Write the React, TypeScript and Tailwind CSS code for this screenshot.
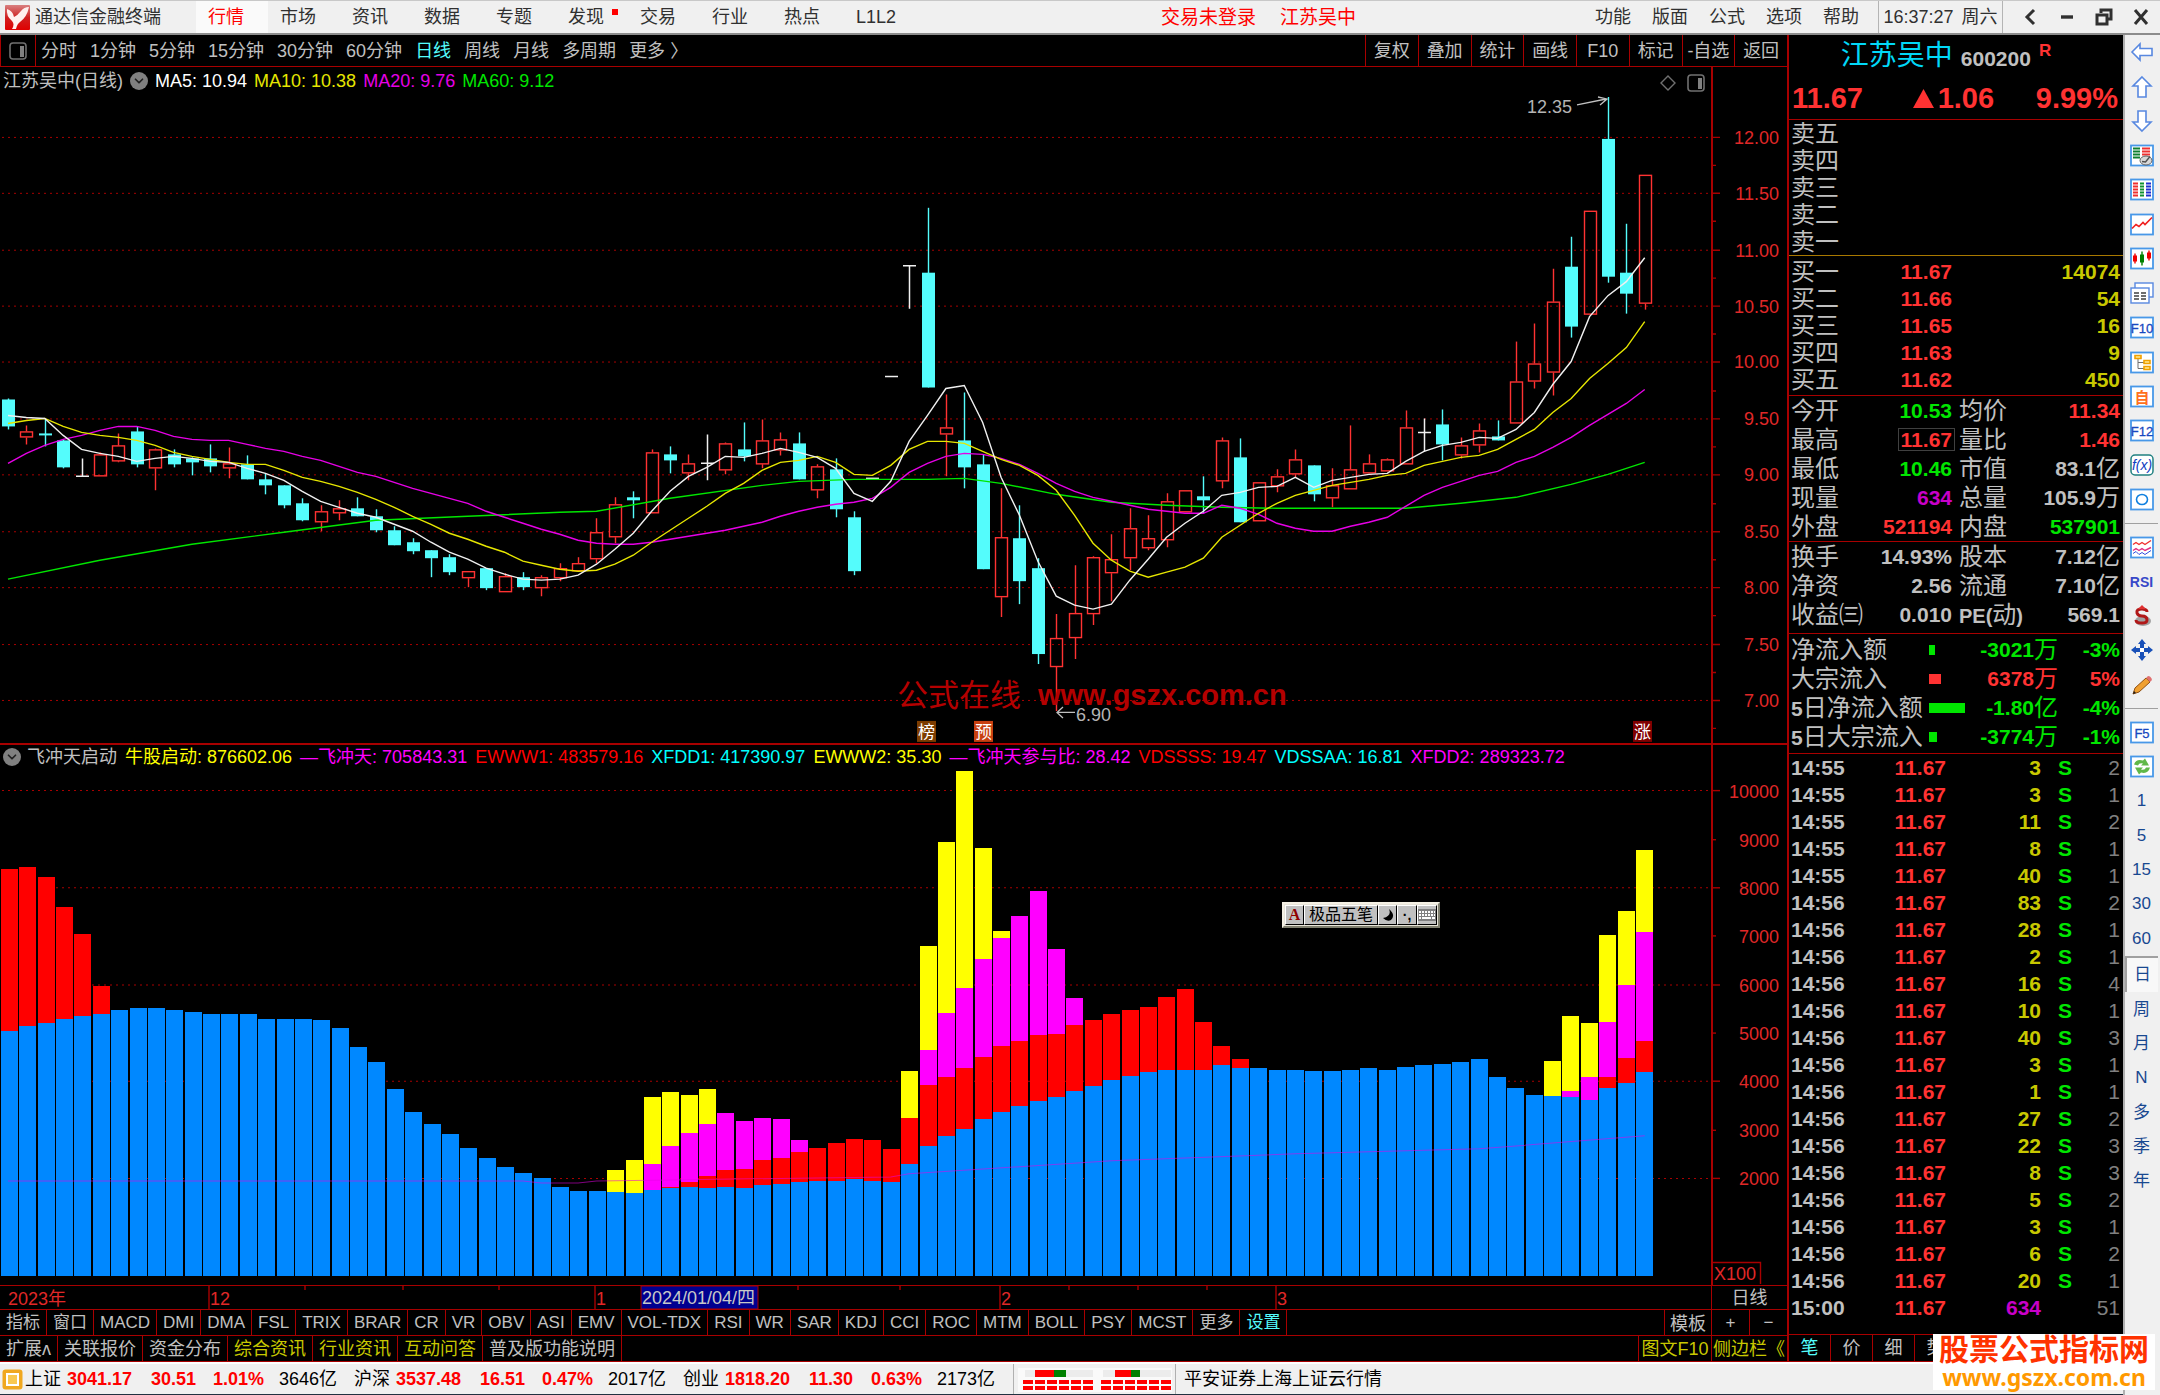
import type { ReactNode } from 'react';
import { ChevronDown } from 'lucide-react';

type Candle = ['u' | 'd' | 'w', number, number, number, number];
type Tick = [string, string, number, string, number];

const LINE = '#a80000';
const STEP = 18.39;

// kind, high, body top, body bottom, low
const candles: Candle[] = [
  ['d', 399, 400, 427, 430], ['u', 426, 432, 438, 445], ['d', 420, 434, 436, 447], ['d', 440, 441, 468, 469],
  ['w', 459, 477, 477, 477], ['u', 453, 455, 477, 477], ['u', 434, 446, 462, 463], ['d', 427, 432, 465, 468],
  ['u', 449, 450, 469, 491], ['d', 450, 455, 465, 468], ['d', 458, 459, 463, 476], ['d', 445, 459, 467, 473],
  ['u', 448, 464, 469, 479], ['d', 456, 465, 480, 480], ['d', 474, 480, 486, 495], ['d', 486, 486, 506, 509],
  ['d', 499, 504, 521, 522], ['u', 506, 512, 523, 532], ['u', 501, 509, 514, 521], ['d', 498, 509, 517, 517],
  ['d', 510, 517, 531, 533], ['d', 527, 531, 546, 546], ['d', 539, 543, 552, 555], ['d', 551, 551, 559, 578],
  ['d', 555, 558, 573, 576], ['u', 572, 572, 579, 588], ['d', 569, 569, 589, 591], ['u', 574, 577, 593, 593],
  ['d', 573, 578, 588, 591], ['u', 576, 578, 589, 597], ['u', 564, 569, 579, 582], ['u', 558, 564, 572, 572],
  ['u', 519, 533, 560, 564], ['u', 498, 505, 538, 544], ['d', 492, 498, 501, 519], ['u', 450, 453, 514, 514],
  ['d', 447, 455, 461, 474], ['u', 455, 464, 474, 481], ['w', 435, 464, 464, 481], ['u', 443, 444, 471, 475],
  ['d', 423, 450, 457, 462], ['u', 420, 441, 465, 469], ['u', 433, 440, 451, 456], ['d', 433, 444, 480, 480],
  ['u', 465, 467, 491, 499], ['d', 459, 470, 510, 518], ['d', 512, 518, 572, 576], ['w', 479, 479, 479, 479],
  ['w', 377, 377, 377, 377], ['w', 266, 266, 266, 309], ['d', 208, 273, 388, 388], ['u', 395, 428, 435, 477],
  ['d', 393, 441, 468, 489], ['d', 455, 465, 570, 570], ['u', 489, 538, 598, 618], ['d', 506, 539, 582, 605],
  ['d', 559, 569, 655, 665], ['u', 615, 639, 668, 712], ['u', 566, 614, 639, 660], ['u', 557, 558, 615, 626],
  ['u', 535, 560, 574, 602], ['u', 509, 529, 559, 571], ['u', 516, 539, 549, 551], ['u', 494, 502, 541, 548],
  ['u', 491, 491, 513, 513], ['d', 477, 497, 501, 514], ['u', 438, 441, 482, 489], ['d', 439, 458, 523, 523],
  ['u', 483, 483, 522, 522], ['u', 470, 477, 487, 493], ['u', 450, 460, 475, 478], ['d', 466, 466, 495, 502],
  ['u', 469, 486, 499, 508], ['u', 426, 470, 490, 490], ['u', 455, 464, 474, 474], ['u', 459, 460, 472, 472],
  ['u', 411, 428, 465, 465], ['w', 419, 433, 433, 452], ['d', 410, 425, 445, 461], ['u', 438, 446, 456, 459],
  ['u', 424, 431, 446, 453], ['d', 421, 437, 441, 441], ['u', 342, 382, 424, 424], ['u', 324, 364, 382, 389],
  ['u', 269, 302, 373, 396], ['d', 237, 267, 327, 338], ['u', 211, 211, 315, 315], ['d', 97, 139, 277, 283],
  ['d', 224, 273, 294, 314], ['u', 175, 175, 304, 310],
];

const ma5 = [
  416, 418, 419, 436, 450, 454, 457, 462, 459, 457, 459, 462, 463, 469, 474, 481, 492, 502, 508, 514, 518, 525, 532, 543, 553,
  560, 569, 575, 580, 581, 580, 576, 565, 550, 534, 512, 492, 477, 468, 457, 458, 454, 449, 453, 458, 469, 494, 502, 482, 442,
  416, 389, 386, 423, 478, 516, 562, 597, 606, 610, 605, 581, 560, 538, 524, 512, 496, 493, 488, 487, 478, 488, 481, 478, 475,
  474, 462, 452, 446, 443, 438, 439, 430, 413, 385, 362, 317, 296, 282, 258,
];
const ma10 = [
  424, 421, 419, 427, 433, 436, 438, 441, 446, 453, 457, 460, 463, 465, 465, 471, 478, 482, 487, 493, 500, 508, 517, 525, 534,
  540, 547, 553, 562, 566, 570, 572, 571, 565, 556, 543, 531, 519, 507, 494, 484, 471, 463, 461, 457, 463, 475, 476, 466, 450,
  442, 442, 444, 452, 460, 466, 476, 491, 516, 544, 561, 572, 578, 573, 568, 559, 538, 526, 514, 504, 496, 491, 486, 483, 480,
  476, 474, 466, 462, 458, 456, 450, 440, 430, 413, 399, 379, 364, 348, 322,
];
const ma20 = [
  464, 454, 446, 440, 436, 431, 427, 427, 431, 437, 440, 441, 441, 445, 449, 452, 457, 461, 467, 473, 477, 483, 489, 494, 499,
  504, 512, 518, 524, 530, 535, 541, 544, 545, 545, 543, 540, 537, 534, 531, 527, 523, 517, 512, 508, 505, 503, 499, 488, 473,
  464, 457, 454, 455, 459, 465, 474, 484, 492, 498, 502, 506, 510, 512, 514, 514, 506, 509, 515, 524, 529, 532, 532, 527, 523,
  518, 507, 496, 488, 482, 476, 472, 463, 457, 448, 438, 426, 415, 404, 390,
];
// index, y
const ma60: [number, number][] = [
  [0, 580], [5, 561], [10, 545], [15, 533], [20, 521], [25, 517], [30, 513], [32, 512], [36, 499], [41, 486], [43, 482],
  [46, 480], [50, 480], [52, 479], [54, 484], [57, 495], [60, 503], [63, 506], [66, 508], [69, 509], [76, 509], [79, 504],
  [82, 498], [85, 485], [87, 475], [89, 463],
];

const blueTops = [
  1031, 1026, 1023, 1019, 1016, 1014, 1010, 1008, 1008, 1010, 1012, 1014, 1014, 1014, 1019, 1019, 1019, 1020, 1028, 1047,
  1062, 1089, 1112, 1124, 1134, 1148, 1158, 1167, 1173, 1178, 1187, 1191, 1191, 1192, 1193, 1190, 1188, 1187, 1188, 1187,
  1188, 1185, 1184, 1182, 1181, 1181, 1179, 1181, 1182, 1164, 1146, 1136, 1129, 1119, 1112, 1106, 1101, 1097, 1091, 1086,
  1080, 1076, 1072, 1070, 1070, 1070, 1065, 1068, 1068, 1070, 1070, 1071, 1071, 1070, 1068, 1070, 1067, 1065, 1064, 1062,
  1059, 1077, 1088, 1095, 1096, 1097, 1100, 1088, 1083, 1072,
];
const redTops: Record<number, number> = {
  0: 870, 1: 868, 2: 878, 3: 908, 4: 935, 5: 987, 36: 1187, 37: 1182, 38: 1176, 39: 1170, 40: 1169, 41: 1160, 42: 1158,
  43: 1152, 44: 1148, 45: 1143, 46: 1139, 47: 1140, 48: 1149, 49: 1118, 50: 1085, 51: 1077, 52: 1068, 53: 1057, 54: 1046,
  55: 1041, 56: 1035, 57: 1034, 58: 1025, 59: 1020, 60: 1014, 61: 1010, 62: 1007, 63: 998, 64: 990, 65: 1022, 66: 1046,
  67: 1059, 87: 1077, 88: 1058, 89: 1041,
};
const magentaTops: Record<number, number> = {
  35: 1164, 36: 1146, 37: 1133, 38: 1124, 39: 1113, 40: 1121, 41: 1118, 42: 1119, 43: 1140, 50: 1050, 51: 1013, 52: 989,
  53: 960, 54: 939, 55: 917, 56: 892, 57: 950, 58: 999, 85: 1091, 86: 1077, 87: 1022, 88: 986, 89: 933,
};
const yellowTops: Record<number, number> = {
  33: 1170, 34: 1160, 35: 1097, 36: 1092, 37: 1095, 38: 1089, 49: 1071, 50: 947, 51: 843, 52: 772, 53: 849, 54: 932,
  84: 1061, 85: 1016, 86: 1023, 87: 936, 88: 912, 89: 851,
};
const trend: [number, number][] = [
  [0, 1181], [28, 1181], [29, 1183], [31, 1183], [32, 1181], [36, 1180], [48, 1177], [49, 1174], [60, 1161], [70, 1154],
  [80, 1149], [89, 1136],
];

const buys: [string, string, string][] = [
  ['买一', '11.67', '14074'],
  ['买二', '11.66', '54'],
  ['买三', '11.65', '16'],
  ['买四', '11.63', '9'],
  ['买五', '11.62', '450'],
];

const R = 'text-[#ff3232]';
const G = 'text-[#00e600]';
const W = 'text-[#c0c0c0]';
const M = 'text-[#c800c8]';

// label, value, value class, label, value, unit, value class
const quotes: [string, string, string, string, string, string, string][] = [
  ['今开', '10.53', G, '均价', '11.34', '', R],
  ['最高', '11.67', R, '量比', '1.46', '', R],
  ['最低', '10.46', G, '市值', '83.1', '亿', W],
  ['现量', '634', M, '总量', '105.9', '万', W],
  ['外盘', '521194', R, '内盘', '537901', '', G],
];
const ratios: typeof quotes = [
  ['换手', '14.93%', W, '股本', '7.12', '亿', W],
  ['净资', '2.56', W, '流通', '7.10', '亿', W],
  ['收益㈢', '0.010', W, 'PE(动)', '569.1', '', W],
];

const flows: [string, string, number, string, string, string][] = [
  ['', '净流入额', 6, '-3021', '万', '-3%'],
  ['', '大宗流入', 12, '6378', '万', '5%'],
  ['5', '日净流入额', 36, '-1.80', '亿', '-4%'],
  ['5', '日大宗流入', 8, '-3774', '万', '-1%'],
];

const ticks: Tick[] = [
  ['14:55', '11.67', 3, 'S', 2], ['14:55', '11.67', 3, 'S', 1], ['14:55', '11.67', 11, 'S', 2], ['14:55', '11.67', 8, 'S', 1],
  ['14:55', '11.67', 40, 'S', 1], ['14:56', '11.67', 83, 'S', 2], ['14:56', '11.67', 28, 'S', 1], ['14:56', '11.67', 2, 'S', 1],
  ['14:56', '11.67', 16, 'S', 4], ['14:56', '11.67', 10, 'S', 1], ['14:56', '11.67', 40, 'S', 3], ['14:56', '11.67', 3, 'S', 1],
  ['14:56', '11.67', 1, 'S', 1], ['14:56', '11.67', 27, 'S', 2], ['14:56', '11.67', 22, 'S', 3], ['14:56', '11.67', 8, 'S', 3],
  ['14:56', '11.67', 5, 'S', 2], ['14:56', '11.67', 3, 'S', 1], ['14:56', '11.67', 6, 'S', 2], ['14:56', '11.67', 20, 'S', 1],
  ['15:00', '11.67', 634, '', 51],
];

const menus = ['行情', '市场', '资讯', '数据', '专题', '发现', '交易', '行业', '热点', 'L1L2'];
const periods = ['分时', '1分钟', '5分钟', '15分钟', '30分钟', '60分钟', '日线', '周线', '月线', '多周期', '更多 〉'];
const tools = ['复权', '叠加', '统计', '画线', 'F10', '标记', '-自选', '返回'];
const indicators = [
  '指标', '窗口', 'MACD', 'DMI', 'DMA', 'FSL', 'TRIX', 'BRAR', 'CR', 'VR', 'OBV', 'ASI', 'EMV', 'VOL-TDX', 'RSI', 'WR', 'SAR',
  'KDJ', 'CCI', 'ROC', 'MTM', 'BOLL', 'PSY', 'MCST', '更多', '设置',
];
const extensions = ['扩展ʌ', '关联报价', '资金分布', '综合资讯', '行业资讯', '互动问答', '普及版功能说明'];
const indexes = [
  ['上证', '3041.17', '30.51', '1.01%', '3646亿'],
  ['沪深', '3537.48', '16.51', '0.47%', '2017亿'],
  ['创业', '1818.20', '11.30', '0.63%', '2173亿'],
];

const cx = (i: number) => 8 + i * STEP;
const path = (ys: number[]) => ys.map((y, i) => `${cx(i)},${y}`).join(' ');
const sparse = (pts: [number, number][]) => pts.map(([i, y]) => `${cx(i)},${y}`).join(' ');
const priceY = (p: number) => Math.round(136.8 + (12 - p) * 112.84) + 0.5;
const volumeY = (v: number) => Math.round(791.4 + ((10000 - v) / 1000) * 48.3) + 0.5;

export default function App() {
  return (
    <div className="flex h-screen flex-col overflow-hidden bg-black font-['Liberation_Sans','Noto_Sans_CJK_SC',sans-serif] text-lg leading-none whitespace-nowrap text-[#c0c0c0]">
      <TitleBar />
      <div className="flex min-h-0 flex-1">
        <div className="flex min-w-0 flex-1 flex-col">
          <div className="flex min-h-0 flex-1">
            <main className="flex min-w-0 flex-1 flex-col">
              <Toolbar />
              <PricePane />
              <VolumePane />
              <DateAxis />
              <IndicatorTabs />
              <ExtensionTabs />
            </main>
            <QuotePanel />
          </div>
          <StatusBar />
        </div>
        <Sidebar />
      </div>
      <div className="absolute right-[5px] bottom-[5px] flex h-14 w-[222px] flex-col items-center bg-white font-bold">
        <div className="text-[30px] leading-[32px] text-[#ff3300]">股票公式指标网</div>
        <div className="font-['Noto_Sans',sans-serif] text-[23px] leading-[22px] text-[#ff9900]">www.gszx.com.cn</div>
      </div>
    </div>
  );
}

function TitleBar() {
  return (
    <header className="flex h-[35px] shrink-0 items-center border-t border-b-2 border-t-[#c8c8c8] border-b-[#8c8c8c] bg-[#f0f0f0] text-[#303030]">
      <svg className="ml-[5px] h-[25px] w-[25px]" viewBox="0 0 25 25">
        <defs>
          <linearGradient id="logo" x1="0" y1="0" x2="0" y2="1">
            <stop offset="0" stopColor="#d88080" />
            <stop offset="0.5" stopColor="#d02020" />
            <stop offset="1" stopColor="#e00000" />
          </linearGradient>
        </defs>
        <rect width="25" height="25" rx="1" fill="url(#logo)" />
        <path d="M2 4 Q8 6 9 12 Q13 10 16 6 Q19 2 24 2 Q22 12 15 17 Q12 19 11 24 L7 24 Q10 19 7 16 Q1 11 2 4Z" fill="#fff0ee" />
      </svg>
      <h1 className="ml-[5px] w-[161px]">通达信金融终端</h1>
      <nav className="flex h-full">
        {menus.map((item, i) => (
          <button
            key={item}
            className={`relative h-full w-[72px] pl-3 text-left ${i === 0 ? 'bg-[#fafafa] text-[#ff0000]' : ''}`}
          >
            {item}
            {i === 5 && <span className="absolute top-2 right-[10px] h-[6px] w-[6px] bg-[#ff0000]" />}
          </button>
        ))}
      </nav>
      <div className="ml-[245px] flex gap-6 text-[19px] text-[#ff0000]">
        <span>交易未登录</span>
        <span>江苏吴中</span>
      </div>
      <nav className="ml-auto flex gap-[21px]">
        {['功能', '版面', '公式', '选项', '帮助'].map((item) => (
          <button key={item}>{item}</button>
        ))}
      </nav>
      <div className="ml-[19px] flex h-full w-[125px] items-center justify-center gap-2 border-x border-[#b4b4b4]">
        <span>16:37:27</span>
        <span>周六</span>
      </div>
      <div className="flex w-[157px] items-center justify-between pr-[9px] pl-[18px]">
        <WindowButton label="back">
          <path d="M13 3 L6 10 L13 17" strokeWidth="3" />
        </WindowButton>
        <WindowButton label="minimize">
          <path d="M3 10 H15" strokeWidth="3.4" />
        </WindowButton>
        <WindowButton label="restore">
          <path d="M7 6 V3 H17 V12 H14 M3 8 H13 V17 H3 Z" strokeWidth="3" />
        </WindowButton>
        <WindowButton label="close">
          <path d="M4 3 L16 17 M16 3 L4 17" strokeWidth="3" />
        </WindowButton>
      </div>
    </header>
  );
}

function WindowButton({ label, children }: { label: string; children: ReactNode }) {
  return (
    <button aria-label={label}>
      <svg className="h-5 w-5" viewBox="0 0 20 20" fill="none" stroke="#303030">
        {children}
      </svg>
    </button>
  );
}

function SplitIcon() {
  return (
    <svg className="h-[18px] w-[18px]" viewBox="0 0 18 18">
      <rect x="1" y="1" width="16" height="16" rx="3" fill="none" stroke="#707070" strokeWidth="1.6" />
      <rect x="11" y="4" width="4" height="11" fill="#808080" />
    </svg>
  );
}

function Toolbar() {
  return (
    <div className="flex h-8 shrink-0 items-center border-b border-[#a80000]">
      <button aria-label="layout" className="flex h-full w-[36px] items-center justify-center border-x border-[#a80000]">
        <SplitIcon />
      </button>
      <div className="ml-[5px] flex gap-[13px]">
        {periods.map((item) => (
          <button key={item} className={item === '日线' ? 'text-[#54fcfc]' : ''}>
            {item}
          </button>
        ))}
      </div>
      <div className="ml-auto grid h-full w-[422px] grid-cols-8">
        {tools.map((item) => (
          <button key={item} className="border-l border-[#a80000]">
            {item}
          </button>
        ))}
      </div>
    </div>
  );
}

function Toggle() {
  return (
    <button aria-label="expand" className="flex h-[18px] w-[18px] items-center justify-center rounded-full bg-[#808080] text-[#202020]">
      <ChevronDown size={14} strokeWidth={3} />
    </button>
  );
}

function PricePane() {
  const prices = [12, 11.5, 11, 10.5, 10, 9.5, 9, 8.5, 8, 7.5, 7];
  return (
    <section className="flex min-h-0 flex-[677]">
      <div className="flex min-w-0 flex-1 flex-col">
        <div className="flex h-[27px] shrink-0 items-center gap-[7px] pl-[3px]">
          <span className="flex items-center gap-[7px]">
            <span>江苏吴中(日线)</span>
            <Toggle />
          </span>
          <span className="text-white">MA5: 10.94</span>
          <span className="text-[#e6e600]">MA10: 10.38</span>
          <span className="text-[#e600e6]">MA20: 9.76</span>
          <span className="text-[#00e600]">MA60: 9.12</span>
          <div className="mr-[6px] ml-auto flex items-center gap-[10px] pt-1">
            <svg className="h-[18px] w-[18px]" viewBox="0 0 18 18" fill="none" stroke="#707070" strokeWidth="1.4">
              <path d="M9 2 L16 9 L9 16 L2 9 Z" />
            </svg>
            <SplitIcon />
          </div>
        </div>
        <svg className="min-h-0 w-full flex-1" viewBox="0 94 1711 650" preserveAspectRatio="none">
          {prices.map((p) => (
            <line key={p} x1="2" x2="1711" y1={priceY(p)} y2={priceY(p)} stroke={LINE} strokeDasharray="2 4" />
          ))}
          {candles.map(([kind, high, top, bottom, low], i) => {
            const x = Math.round(cx(i));
            if (kind === 'w') {
              return <path key={i} d={`M${x - 6} ${top} h13 M${x + 0.5} ${high} V${low}`} stroke="#f0f0f0" strokeWidth="1.5" />;
            }
            if (kind === 'd') {
              return (
                <g key={i} fill="#54fcfc">
                  <rect x={x - 6} y={top} width="13" height={bottom - top} />
                  <rect x={x - 0.2} y={high} width="1.4" height={low - high} />
                </g>
              );
            }
            return (
              <g key={i} stroke="#ff3232" strokeWidth="1.4" fill="none">
                <rect x={x - 5.5} y={top + 0.5} width="12" height={bottom - top - 1} />
                <path d={`M${x + 0.5} ${high} V${top} M${x + 0.5} ${bottom} V${low}`} />
              </g>
            );
          })}
          <g fill="none" strokeWidth="1.4">
            <polyline points={sparse(ma60)} stroke="#00e600" />
            <polyline points={path(ma20)} stroke="#e600e6" />
            <polyline points={path(ma10)} stroke="#e6e600" />
            <polyline points={path(ma5)} stroke="#f0f0f0" />
          </g>
          <g stroke="#c0c0c0" strokeWidth="1.3" fill="none">
            <path d="M1577 105 L1606 99 M1598 97 L1607 99 L1600 105" />
            <path d="M1057 713.5 H1075 M1063 708 L1057 713.5 L1063 719" />
          </g>
          <g fill="#b4b4b4" fontSize="18">
            <text x="1527" y="113">12.35</text>
            <text x="1076" y="722">6.90</text>
          </g>
          <g fill="#b40000">
            <text x="897" y="707" fontSize="31">公式在线</text>
            <text x="1038" y="706" fontSize="29" fontWeight="bold">www.gszx.com.cn</text>
          </g>
          <Marker x={917} fill="#7c3c00" label="榜" />
          <Marker x={974} fill="#c84010" label="预" />
          <Marker x={1633} fill="#800000" label="涨" />
        </svg>
      </div>
      <svg className="h-full w-[76px] shrink-0 border-l-2 border-[#a80000]" viewBox="0 67 74 677" preserveAspectRatio="none">
        {prices.map((p) => (
          <g key={p}>
            <path d={`M0 ${priceY(p)} h7 M0 ${priceY(p - 0.25)} h3`} stroke={LINE} strokeWidth="1.4" />
            <text x="66" y={priceY(p) + 6.5} fontSize="18" fill="#e02828" textAnchor="end">
              {p.toFixed(2)}
            </text>
          </g>
        ))}
      </svg>
    </section>
  );
}

function Marker({ x, fill, label }: { x: number; fill: string; label: string }) {
  return (
    <g>
      <rect x={x} y="722" width="19" height="21" fill={fill} />
      <text x={x + 1} y="739" fontSize="17" fill="#fff">
        {label}
      </text>
    </g>
  );
}

function VolumePane() {
  const levels = [10000, 9000, 8000, 7000, 6000, 5000, 4000, 3000, 2000];
  return (
    <section className="relative flex min-h-0 flex-[541] border-t-2 border-[#a80000]">
      <div className="flex min-w-0 flex-1 flex-col">
        <div className="flex h-[25px] shrink-0 items-center gap-2 pl-[3px]">
          <span className="flex items-center gap-[6px]">
            <Toggle />
            飞冲天启动
          </span>
          <span className="text-[#ffff00]">牛股启动: 876602.06</span>
          <span className="text-[#ff00ff]">—飞冲天: 705843.31</span>
          <span className="text-[#ff0000]">EWWW1: 483579.16</span>
          <span className="text-[#00ffff]">XFDD1: 417390.97</span>
          <span className="text-[#ffff00]">EWWW2: 35.30</span>
          <span className="text-[#ff00ff]">—飞冲天参与比: 28.42</span>
          <span className="text-[#ff0000]">VDSSSS: 19.47</span>
          <span className="text-[#00ffff]">VDSSAA: 16.81</span>
          <span className="text-[#ff00ff]">XFDD2: 289323.72</span>
        </div>
        <svg className="min-h-0 w-full flex-1" viewBox="0 771 1711 514" preserveAspectRatio="none">
          {[10000, 8000, 6000, 4000, 2000].map((v) => (
            <line key={v} x1="2" x2="1711" y1={volumeY(v)} y2={volumeY(v)} stroke={LINE} strokeDasharray="2 4" />
          ))}
          {blueTops.map((top, i) => {
            const x = Math.round(1 + i * 18.37);
            const layers: [number | undefined, string][] = [
              [yellowTops[i], '#ffff00'],
              [magentaTops[i], '#ff00ff'],
              [redTops[i], '#ff0000'],
              [top, '#0088ff'],
            ];
            return (
              <g key={i} shapeRendering="crispEdges">
                {layers.map(([y, fill]) => y !== undefined && <rect key={fill} x={x} y={y} width="17" height={1276 - y} fill={fill} />)}
              </g>
            );
          })}
          <polyline points={sparse(trend)} stroke="#e600e6" strokeWidth="1" strokeOpacity="0.55" fill="none" />
        </svg>
      </div>
      <svg className="h-full w-[76px] shrink-0 border-l-2 border-[#a80000]" viewBox="0 746 74 539" preserveAspectRatio="none">
        {levels.map((v) => (
          <g key={v}>
            <path d={`M0 ${volumeY(v)} h${v % 2000 ? 3 : 7}`} stroke={LINE} strokeWidth="1.4" />
            <text x="66" y={volumeY(v) + 7} fontSize="18" fill="#e02828" textAnchor="end">
              {v}
            </text>
          </g>
        ))}
        <path d="M0 1262.5 H47.5 V1284" stroke={LINE} strokeWidth="1.4" fill="none" />
        <text x="1" y="1280" fontSize="18" fill="#e02828">X100</text>
      </svg>
      <ImeBar />
    </section>
  );
}

function ImeBar() {
  const key = 'flex h-full items-center justify-center border border-t-white border-r-black border-b-black border-l-white bg-[#c0c0c0]';
  return (
    <div className="absolute top-[157px] left-[1282px] flex h-[26px] w-[158px] border-2 border-t-[#f4f0e4] border-r-[#808070] border-b-[#808070] border-l-[#f4f0e4] bg-[#e8e4d8] p-px text-black">
      <button className={`${key} w-[19px] font-['Liberation_Serif',serif] text-base font-bold text-[#900000]`}>A</button>
      <button className={`${key} flex-1 text-base`}>极品五笔</button>
      <button aria-label="half width" className={`${key} w-[19px]`}>
        <svg className="h-[14px] w-[14px]" viewBox="0 0 14 14">
          <path d="M8 1 Q11 8 2 10 Q6 14 10 12 Q15 7 8 1Z" />
        </svg>
      </button>
      <button className={`${key} w-[20px] text-sm font-bold`}>·,</button>
      <button aria-label="keyboard" className={`${key} w-[20px]`}>
        <svg className="h-3 w-[18px]" viewBox="0 0 18 12">
          <rect width="18" height="12" fill="#808080" />
          <path d="M1 3 H17 M1 6 H17" stroke="#fff" strokeWidth="2" strokeDasharray="2 1" />
          <path d="M1 9 H3 M4 9 H13 M14 9 H17" stroke="#fff" strokeWidth="2" />
        </svg>
      </button>
    </div>
  );
}

function DateAxis() {
  const minor = [305, 403, 499, 798, 900, 1069, 1138, 1207];
  const months: [number, string][] = [[209, '12'], [595, '1'], [1000, '2'], [1276, '3']];
  return (
    <div className="flex h-6 shrink-0 border-t border-[#a80000]">
      <svg className="h-full min-w-0 flex-1" viewBox="0 0 1711 23" preserveAspectRatio="none" fontSize="18">
        {minor.map((x) => (
          <line key={x} x1={x} x2={x} y1="0" y2="4" stroke={LINE} strokeWidth="1.4" />
        ))}
        {months.map(([x, label]) => (
          <g key={label}>
            <line x1={x} x2={x} y1="0" y2="23" stroke={LINE} strokeWidth="1.4" />
            <text x={x + 1} y="19" fill="#e02828">{label}</text>
          </g>
        ))}
        <text x="8" y="19" fill="#e02828">2023年</text>
        <rect x="641" y="0" width="117" height="23" fill="#000090" stroke={LINE} />
        <text x="642" y="18" fill="#c8c8c8">2024/01/04/四</text>
      </svg>
      <div className="flex w-[76px] items-center justify-center border-l border-[#a80000]">日线</div>
    </div>
  );
}

function IndicatorTabs() {
  return (
    <div className="flex h-[26px] shrink-0 border-t border-[#a80000] text-[17px]">
      {indicators.map((item) => (
        <button key={item} className={`border-r border-[#a80000] px-[6px] ${item === '设置' ? 'text-[#54fcfc]' : ''}`}>
          {item}
        </button>
      ))}
      <button className="ml-auto w-[47px] border-l border-[#a80000] text-lg">模板</button>
      <button className="w-[38px] border-l border-[#a80000]">+</button>
      <button className="w-[38px] border-l border-[#a80000]">−</button>
    </div>
  );
}

function ExtensionTabs() {
  return (
    <div className="flex h-[27px] shrink-0 border-y border-[#a80000]">
      {extensions.map((item, i) => (
        <button key={item} className={`border-r border-[#a80000] px-[6px] ${i > 2 && i < 6 ? 'text-[#c8c800]' : ''}`}>
          {item}
        </button>
      ))}
      <button className="ml-auto w-[73px] border-l border-[#a80000] text-[#c8c800]">图文F10</button>
      <button className="w-[76px] overflow-hidden border-l border-[#a80000] pl-px text-left text-[#c8c800]">侧边栏《</button>
    </div>
  );
}

function QuoteRows({ rows }: { rows: typeof quotes }) {
  return (
    <>
      {rows.map(([a, av, ac, b, bv, unit, bc]) => (
        <div key={a} className="flex h-[29px] items-center pr-[3px] pl-[2px]">
          <span className="text-2xl leading-none">{a}</span>
          <span className={`ml-auto text-[21px] font-bold ${ac} ${a === '最高' ? 'border border-[#404040] px-[2px]' : 'px-[3px]'}`}>{av}</span>
          <span className="flex w-[165px] items-center pl-[4px]">
            <span className="text-2xl leading-none">{b === 'PE(动)' ? <PeLabel /> : b}</span>
            <span className={`ml-auto text-[21px] font-bold ${bc}`}>{bv}</span>
            <span className="text-2xl leading-none">{unit}</span>
          </span>
        </div>
      ))}
    </>
  );
}

function PeLabel() {
  return (
    <>
      <b className="text-[20px]">PE(</b>动<b className="text-[20px]">)</b>
    </>
  );
}

function QuotePanel() {
  return (
    <aside className="flex w-[336px] shrink-0 flex-col border-l-2 border-[#a80000]">
      <div className="flex h-[85px] shrink-0 flex-col border-b border-[#a80000]">
        <div className="flex h-[42px] items-center justify-center gap-2 pr-5">
          <span className="text-[28px] text-[#00d8f8]">江苏吴中</span>
          <b className="pt-1 text-[21px]">600200</b>
          <span className="-mt-3 text-[17px] font-bold text-[#ff3232]">R</span>
        </div>
        <div className="flex h-[42px] items-center justify-between pr-[5px] pl-[3px] text-[29px] font-bold text-[#ff3232]">
          <span>11.67</span>
          <span className="flex items-center gap-1 pl-2">
            <svg className="h-[19px] w-[21px]" viewBox="0 0 21 19">
              <path d="M10.5 0 L21 19 H0 Z" fill="#ff3232" />
            </svg>
            1.06
          </span>
          <span>9.99%</span>
        </div>
      </div>
      <div className="shrink-0 border-b border-[#a87800] pl-[2px] text-2xl leading-[27px]">
        {['卖五', '卖四', '卖三', '卖二', '卖一'].map((item) => (
          <div key={item}>{item}</div>
        ))}
      </div>
      <div className="shrink-0 border-b border-[#a80000] py-[2px]">
        {buys.map(([label, price, volume]) => (
          <div key={label} className="flex h-[27px] items-center pr-[3px] pl-[2px] text-[21px] font-bold">
            <span className="text-2xl leading-none font-normal">{label}</span>
            <span className="ml-auto text-[#ff3232]">{price}</span>
            <span className="w-[168px] text-right text-[#c8c800]">{volume}</span>
          </div>
        ))}
      </div>
      <div className="shrink-0 border-b border-[#a80000]">
        <QuoteRows rows={quotes} />
      </div>
      <div className="shrink-0 border-b border-[#a80000] pb-1">
        <QuoteRows rows={ratios} />
      </div>
      <div className="shrink-0 border-b border-[#a80000] pt-px pb-[2px]">
        {flows.map(([prefix, label, width, amount, unit, percent]) => {
          const up = !amount.startsWith('-');
          return (
            <div key={label} className={`flex h-[29px] items-center pr-[3px] pl-[2px] text-[21px] font-bold ${up ? R : G}`}>
              <span className="w-[138px] text-2xl leading-none font-normal text-[#c0c0c0]">
                {prefix && <b className="text-[21px]">{prefix}</b>}
                {label}
              </span>
              <span className={`h-[10px] ${up ? 'bg-[#ff3232]' : 'bg-[#00e600]'}`} style={{ width }} />
              <span className="ml-auto flex items-center">
                {amount}
                <span className="text-2xl leading-none font-normal">{unit}</span>
              </span>
              <span className="w-[62px] text-right">{percent}</span>
            </div>
          );
        })}
      </div>
      <table className="w-full shrink-0 table-fixed text-right text-[21px] font-bold">
        <tbody>
          {ticks.map(([time, price, volume, side, count], i) => (
            <tr key={i} className="h-[27px]">
              <td className="w-[70px] pl-[2px] text-left">{time}</td>
              <td className="w-[87px] text-[#ff3232]">{price}</td>
              <td className={`w-[95px] ${side ? 'text-[#c8c800]' : 'text-[#c800c8]'}`}>{volume}</td>
              <td className="w-[31px] text-[#00e600]">{side}</td>
              <td className="pr-[3px] font-normal text-[#808080]">{count}</td>
            </tr>
          ))}
        </tbody>
      </table>
      <div className="mt-auto flex h-[28px] shrink-0 border-y border-[#a80000]">
        {['笔', '价', '细', '势'].map((item, i) => (
          <button key={item} className={`w-[42px] border-r border-[#a80000] ${i === 0 ? 'text-[#54fcfc]' : ''}`}>
            {item}
          </button>
        ))}
      </div>
    </aside>
  );
}

function StatusBar() {
  return (
    <footer className="flex h-[33px] shrink-0 items-center border-t-2 border-b border-t-white border-b-[#203040] bg-[#f0f0f0] text-black">
      <svg className="ml-[2px] h-[21px] w-[21px]" viewBox="0 0 21 21">
        <rect x="0.5" y="0.5" width="20" height="20" rx="3" fill="#f0a820" />
        <rect x="5" y="5" width="11" height="11" fill="#f8c850" stroke="#fff" strokeWidth="2" />
      </svg>
      <div className="flex gap-[14px] pl-[2px]">
        {indexes.map(([name, value, change, percent, amount]) => (
          <span key={name} className="flex">
            {name}
            <b className="w-[90px] pl-[6px] text-[#ff0000]">{value}</b>
            <b className="w-[62px] text-[#ff0000]">{change}</b>
            <b className="w-[66px] text-[#ff0000]">{percent}</b>
            <span className="w-[61px]">{amount}</span>
          </span>
        ))}
      </div>
      <svg className="ml-3 h-full w-[168px]" viewBox="0 0 168 30" preserveAspectRatio="none">
        <path d="M3.5 0 V30 M165.5 0 V30" stroke="#b0b0b0" />
        <rect x="8" y="4" width="154" height="24" fill="#fafafa" />
        <path d="M15 9.5 H83 M93 9.5 H161" stroke="#ececec" strokeWidth="7" />
        <path d="M25 9.5 H44 M105 9.5 H121" stroke="#ff0000" strokeWidth="7" />
        <path d="M44 9.5 H56 M121 9.5 H130" stroke="#008000" strokeWidth="7" />
        <path d="M13 18 H83 M91 18 H161 M13 24 H83 M91 24 H161" stroke="#ff0000" strokeWidth="4" strokeDasharray="10 2" />
      </svg>
      <span className="ml-[6px]">平安证券上海上证云行情</span>
    </footer>
  );
}

function Box({ children }: { children: ReactNode }) {
  return (
    <svg className="h-[23px] w-6" viewBox="0 0 24 22" fill="none">
      <rect x="1" y="1" width="22" height="20" fill="#fff" stroke="#4898e8" strokeWidth="1.8" />
      {children}
    </svg>
  );
}

function BoxText({ children }: { children: string }) {
  return (
    <Box>
      <text x="12" y="16" fontSize="13" fill="#1848c0" stroke="#1848c0" strokeWidth="0.3" textAnchor="middle">
        {children}
      </text>
    </Box>
  );
}

function ArrowIcon({ d }: { d: string }) {
  return (
    <svg className="h-6 w-6" viewBox="0 0 24 24" fill="#fff" stroke="#5888e0" strokeWidth="1.6">
      <path d={d} />
    </svg>
  );
}

const quoteIcons: [string, ReactNode][] = [
  ['left', <ArrowIcon d="M2 12 L10 4 V8.5 H22 V15.5 H10 V20 Z" />],
  ['up', <ArrowIcon d="M12 2 L21 11 H16 V22 H8 V11 H3 Z" />],
  ['down', <ArrowIcon d="M12 22 L21 13 H16 V2 H8 V13 H3 Z" />],
  ['report', (
    <Box>
      <path d="M3 4 H10 M3 7 H10 M3 10 H10 M3 13 H10" stroke="#108030" strokeWidth="1.8" />
      <path d="M12 4 H20 M12 7 H20 M12 10 H20" stroke="#f03030" strokeWidth="1.8" />
      <ellipse cx="16" cy="16" rx="6" ry="4.5" fill="#d8d8d8" stroke="#606060" />
      <path d="M12 17 L15.5 17.5 L20 12" stroke="#505050" strokeWidth="1.4" />
    </Box>
  )],
  ['table', (
    <Box>
      <path d="M3 5 H8 M3 8 H8 M3 11 H8 M3 14 H8 M3 17 H8" stroke="#f03030" strokeWidth="1.8" />
      <path d="M10 5 H14 M10 8 H14 M10 11 H14 M10 14 H14 M10 17 H14" stroke="#109030" strokeWidth="1.8" />
      <path d="M16 5 H21 M16 8 H21 M16 11 H21 M16 14 H21 M16 17 H21" stroke="#2030d0" strokeWidth="1.8" />
    </Box>
  )],
  ['trend', <Box><path d="M2 15 L6 11 L9 13 L13 9 L15 11 L22 4" stroke="#f02020" strokeWidth="1.6" /></Box>],
  ['candles', (
    <Box>
      <path d="M5 6 V16 M19 3 V13" stroke="#f00000" strokeWidth="1.4" />
      <rect x="3" y="8" width="4" height="6" fill="#f00000" />
      <path d="M12 4 V18" stroke="#008000" strokeWidth="1.4" />
      <rect x="10" y="7" width="4" height="8" fill="#008000" />
      <rect x="17" y="5" width="4" height="6" fill="#f00000" />
    </Box>
  )],
  ['news', (
    <svg className="h-[22px] w-6" viewBox="0 0 24 22" fill="#fff" stroke="#5888e0" strokeWidth="1.4">
      <rect x="5" y="1" width="18" height="14" />
      <rect x="1" y="6" width="18" height="15" />
      <path d="M4 11 H9 M11 11 H16 M4 14 H9 M11 14 H16 M4 17 H9 M11 17 H16" stroke="#404040" strokeWidth="1.5" />
    </svg>
  )],
  ['F10', <BoxText>F10</BoxText>],
  ['tree', (
    <Box>
      <path d="M8 7 V17 H14 M8 11 H14" stroke="#707070" />
      <path d="M5 4 H11 V7 H5 Z M14 9 H20 V12 H14 Z M14 15 H20 V18 H14 Z" stroke="#f0a000" strokeWidth="1.6" fill="#ffe890" />
    </Box>
  )],
  ['self', (
    <Box>
      <text x="12" y="17" fontSize="15" fontWeight="bold" fill="#ff7020" textAnchor="middle">自</text>
    </Box>
  )],
  ['F12', <BoxText>F12</BoxText>],
  ['formula', (
    <svg className="h-[22px] w-6" viewBox="0 0 24 22">
      <rect x="1" y="1" width="22" height="20" rx="4" fill="#fff" stroke="#208080" strokeWidth="1.5" />
      <text x="12" y="16" fontSize="14" fontStyle="italic" fill="#1040c0" textAnchor="middle">f(x)</text>
    </svg>
  )],
  ['ring', <Box><ellipse cx="12" cy="11" rx="5.5" ry="5" stroke="#1080e0" strokeWidth="1.6" /></Box>],
];

const drawIcons: [string, ReactNode][] = [
  ['waves', (
    <Box>
      <path d="M3 8 L6 6 L9 8 L12 6 L15 8 L21 4" stroke="#f03030" strokeWidth="1.4" />
      <path d="M3 14 L6 12 L9 14 L12 12 L15 14 L21 11" stroke="#e03080" strokeWidth="1.4" />
      <path d="M3 17 L6 15 L9 18 L12 16 L15 18 L21 14" stroke="#3050e0" />
    </Box>
  )],
  ['RSI', <span className="text-sm font-bold text-[#3848c8]">RSI</span>],
  ['amount', (
    <svg className="h-[22px] w-5" viewBox="0 0 20 22">
      <ellipse cx="11" cy="16" rx="8" ry="5" fill="#a0a0a0" />
      <path d="M15 7 Q15 4 10 4 Q4 4 5 8 Q6 11 10 11 Q15 11 15 15 Q15 18 10 18 Q4 18 4 15" stroke="#b01818" strokeWidth="3" fill="none" />
      <path d="M10 0 L14 4 H6 Z" fill="#e03030" />
    </svg>
  )],
  ['move', (
    <svg className="h-[22px] w-[22px]" viewBox="0 0 22 22" fill="#1850b8">
      <path d="M11 0 L15 5 H7 Z M11 22 L15 17 H7 Z M0 11 L5 7 V15 Z M22 11 L17 7 V15 Z" />
      <path d="M11 4 V18 M4 11 H18" stroke="#1850b8" strokeWidth="4" />
      <rect x="9" y="9" width="4" height="4" fill="#fff" />
    </svg>
  )],
  ['pencil', (
    <svg className="h-[22px] w-[22px]" viewBox="0 0 22 22">
      <path d="M2 20 L4 14 L15 4 L19 8 L8 18 Z" fill="#f0a030" stroke="#905010" />
      <path d="M15 4 L17 2 Q20 2 21 6 L19 8 Z" fill="#e07070" />
      <path d="M2 20 L3 17 L5 19 Z" fill="#202020" />
    </svg>
  )],
];

const periodIcons: [string, ReactNode][] = [
  ['F5', <BoxText>F5</BoxText>],
  ['refresh', (
    <Box>
      <path d="M4 9 Q6 3 13 5 L15 3 L19 10 L11 10 L13 8 Q9 7 8 10 Z M20 12 Q18 19 11 17 L9 19 L5 12 L13 12 L11 14 Q15 15 16 12 Z" fill="#60b848" />
    </Box>
  )],
  ...['1', '5', '15', '30', '60', '日', '周', '月', 'N', '多', '季', '年'].map((item): [string, ReactNode] => [item, item]),
];

function IconGroup({ items }: { items: [string, ReactNode][] }) {
  return (
    <>
      {items.map(([label, icon]) => (
        <button
          key={label}
          aria-label={label}
          className={`flex w-full flex-1 items-center justify-center ${label === '日' ? 'border-t-2 border-l-2 border-[#a0a0a0] bg-[#f8f8f8]' : ''}`}
        >
          {icon}
        </button>
      ))}
    </>
  );
}

function Sidebar() {
  return (
    <aside className="flex w-[37px] shrink-0 flex-col border-l-2 border-[#b0b0b0] bg-[#f0f0f0] pr-[2px] text-[17px] text-[#184890]">
      <div className="flex h-[482px] flex-col">
        <IconGroup items={quoteIcons} />
      </div>
      <hr className="my-[6px] border-[#a0a0a0]" />
      <div className="flex h-[172px] flex-col">
        <IconGroup items={drawIcons} />
      </div>
      <hr className="my-[6px] border-[#a0a0a0]" />
      <div className="flex h-[483px] flex-col">
        <IconGroup items={periodIcons} />
      </div>
    </aside>
  );
}
